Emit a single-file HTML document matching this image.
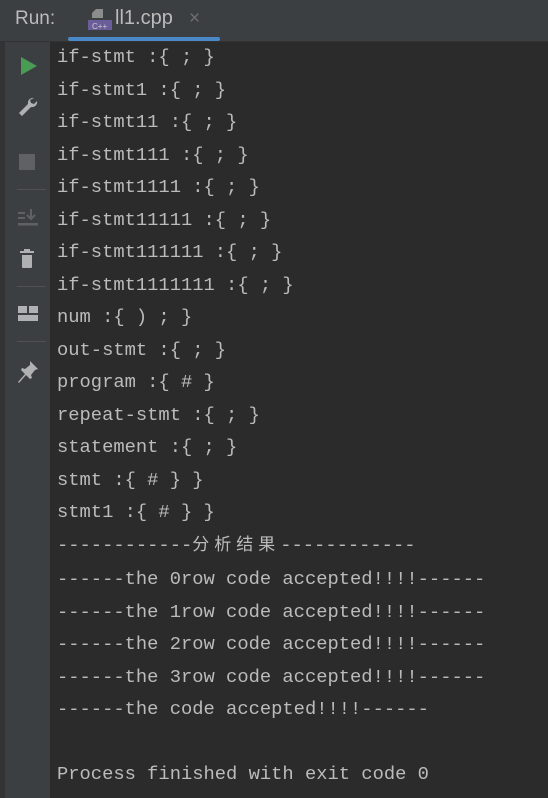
<!DOCTYPE html>
<html><head><meta charset="utf-8"><style>
body{margin:0;width:548px;height:798px;background:#2b2b2b;overflow:hidden;position:relative;font-family:"Liberation Sans",sans-serif}
#hdr{position:absolute;left:0;top:0;width:548px;height:41px;background:#3c3f41;border-bottom:1px solid #323232}
#run{position:absolute;left:15px;top:8px;font-size:19px;color:#bbbbbb}
#tab{position:absolute;left:115px;top:7px;font-size:20px;color:#bbbbbb}
#x{position:absolute;left:189px;top:8px;font-size:19px;color:#6e6e6e}
#ul{position:absolute;left:68px;top:37px;width:152px;height:4px;background:#4a88c7;border-radius:2px}
#edge{position:absolute;left:0;top:42px;width:5px;height:756px;background:#313335}
#tb{position:absolute;left:5px;top:42px;width:45px;height:756px;background:#3c3f41}
.sep{position:absolute;left:12px;width:29px;height:1px;background:#515151}
#con{position:absolute;left:57px;top:41px;margin:0;font-family:"Liberation Mono","Noto Sans CJK SC",monospace;font-size:18.8px;line-height:32.5px;color:#bbbbbb;white-space:pre}
.cj{letter-spacing:5px;font-size:17px}
</style></head><body>
<div id="hdr">
<div id="run">Run:</div>
<svg style="position:absolute;left:88px;top:8px" width="24" height="24"><path d="M8 1h7v9H4V5z" fill="#8c8c8c"/><rect x="0" y="12" width="24" height="10" fill="#6a5d9a"/><text x="4" y="21" font-size="8" fill="#ccc" font-family="Liberation Sans">C++</text></svg>
<div id="tab">ll1.cpp</div>
<div id="x">×</div>
<div id="ul"></div>
</div>
<div id="edge"></div>
<div id="tb">
<svg style="position:absolute;left:15px;top:14px" width="18" height="20"><path d="M1 1L17 10L1 19Z" fill="#499c54"/></svg>
<svg style="position:absolute;left:12px;top:54px" width="22" height="22"><path d="M17 2a5 5 0 0 0-6 6L2 17l3 3 9-9a5 5 0 0 0 6-6l-3 3-3-1-1-3z" fill="#afb1b3"/></svg>
<div style="position:absolute;left:14px;top:112px;width:16px;height:16px;background:#5f6163"></div>
<div class="sep" style="top:147px"></div>
<svg style="position:absolute;left:12px;top:166px" width="22" height="20"><rect x="1" y="4" width="7" height="2" fill="#5f6163"/><rect x="1" y="9" width="7" height="2" fill="#5f6163"/><rect x="1" y="15" width="20" height="2.5" fill="#5f6163"/><path d="M14 1v9M10 7l4 4 4-4" stroke="#5f6163" stroke-width="2" fill="none"/></svg>
<svg style="position:absolute;left:14px;top:206px" width="18" height="22"><rect x="1" y="3" width="14" height="2" fill="#afb1b3"/><rect x="5" y="1" width="6" height="3" fill="#afb1b3"/><path d="M3 7h10v12a1 1 0 0 1-1 1H4a1 1 0 0 1-1-1z" fill="#afb1b3"/></svg>
<div class="sep" style="top:244px"></div>
<svg style="position:absolute;left:13px;top:264px" width="20" height="18"><rect x="0" y="0" width="9" height="7" fill="#afb1b3"/><rect x="11" y="0" width="9" height="7" fill="#afb1b3"/><rect x="0" y="9" width="20" height="6" fill="#afb1b3"/></svg>
<div class="sep" style="top:299px"></div>
<svg style="position:absolute;left:12px;top:318px" width="22" height="24"><path d="M13 1l8 8-3 1-4 5 1 3-2 1-4-4-7 8-1-1 7-8-4-4 1-2 3 1 5-4z" fill="#afb1b3"/></svg>
</div>
<pre id="con">if-stmt :{ ; }
if-stmt1 :{ ; }
if-stmt11 :{ ; }
if-stmt111 :{ ; }
if-stmt1111 :{ ; }
if-stmt11111 :{ ; }
if-stmt111111 :{ ; }
if-stmt1111111 :{ ; }
num :{ ) ; }
out-stmt :{ ; }
program :{ # }
repeat-stmt :{ ; }
statement :{ ; }
stmt :{ # } }
stmt1 :{ # } }
------------<span class="cj">分析结果</span>------------
------the 0row code accepted!!!!------
------the 1row code accepted!!!!------
------the 2row code accepted!!!!------
------the 3row code accepted!!!!------
------the code accepted!!!!------

Process finished with exit code 0</pre>
</body></html>
